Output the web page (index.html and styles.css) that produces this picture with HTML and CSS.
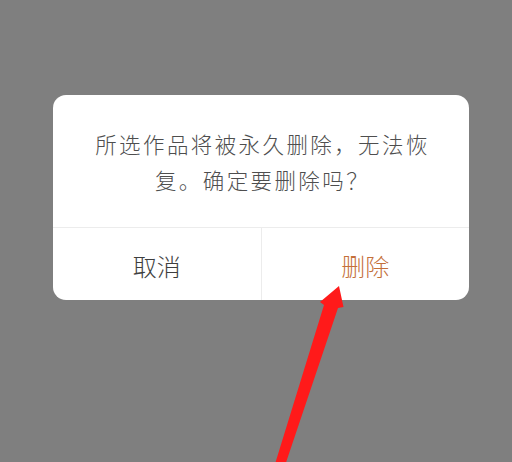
FILE: index.html
```html
<!DOCTYPE html>
<html lang="zh-CN">
<head>
<meta charset="utf-8">
<link rel="stylesheet" href="styles.css">
</head>
<body>
<div class="screen">
  <div class="dialog">
    <div class="message">所选作品将被永久删除，无法恢<br>复。确定要删除吗？</div>
    <div class="actions">
      <div class="btn cancel">取消</div>
      <div class="btn confirm">删除</div>
    </div>
  </div>
  <svg class="arrow" width="512" height="462" viewBox="0 0 512 462">
    <path d="M275 464 L285.5 464 L338 308 L343.5 307 L339 286 L320 302 L324 305 Z" fill="#ff1a1a"/>
  </svg>
</div>
</body>
</html>
```
FILE: styles.css
```css
html, body {
  margin: 0;
  padding: 0;
}
body {
  width: 512px;
  height: 462px;
  overflow: hidden;
  background: #7f7f7f;
  font-family: "Noto Sans CJK SC", "Noto Sans", sans-serif;
}
.screen {
  position: relative;
  width: 512px;
  height: 462px;
  padding-top: 95px;
  box-sizing: border-box;
}
.dialog {
  margin-left: 53px;
  width: 416px;
  height: 205px;
  background: #fff;
  border-radius: 13px;
  display: flex;
  flex-direction: column;
  overflow: hidden;
}
.message {
  height: 133px;
  box-sizing: border-box;
  padding-top: 31px;
  padding-left: 3px;
  text-align: center;
  font-size: 21.5px;
  font-weight: 300;
  letter-spacing: 2.4px;
  line-height: 36px;
  color: #4e4e4e;
  border-bottom: 1px solid #ececec;
}
.actions {
  flex: 1;
  display: flex;
}
.btn {
  flex: 1;
  display: flex;
  align-items: center;
  justify-content: center;
  font-size: 24px;
  font-weight: 300;
  padding-top: 2px;
}
.cancel {
  color: #3e3e3e;
  border-right: 1px solid #ececec;
}
.confirm {
  color: #c4703a;
}
.arrow {
  position: absolute;
  left: 0;
  top: 0;
}
```
